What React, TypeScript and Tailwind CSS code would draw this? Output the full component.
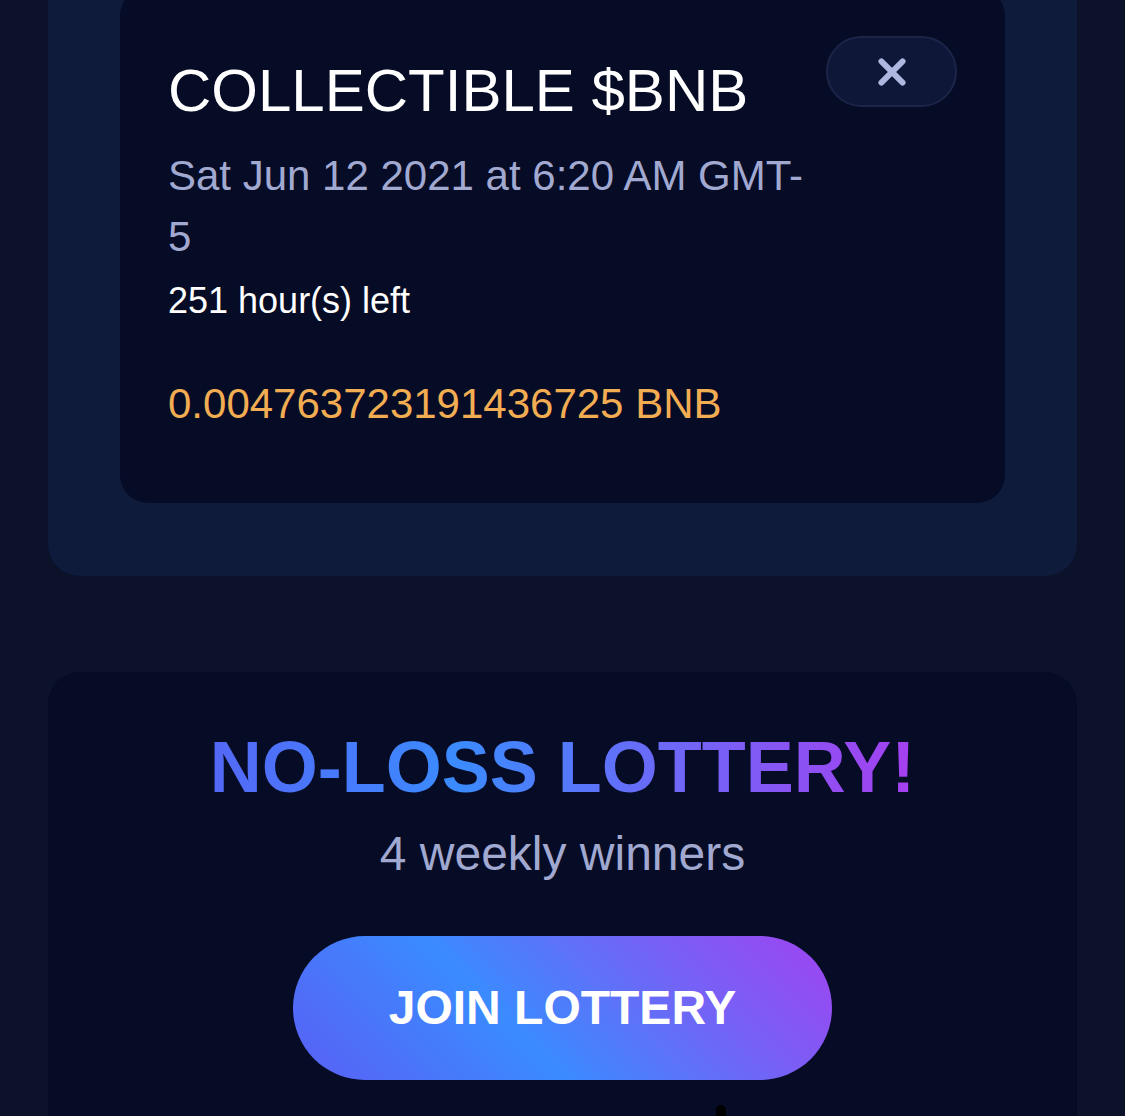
import React from 'react';

const XIcon = () => (
  <svg width="34" height="34" viewBox="0 0 32 32" fill="none">
    <path d="M6 6L26 26M26 6L6 26" stroke="#aeb7e0" strokeWidth="5.5" strokeLinecap="round" />
  </svg>
);

const App = () => {
  return (
    <div
      className="h-[1116px] w-full overflow-hidden bg-[#0b122a]"
      style={{ fontFamily: '"Liberation Sans", Arial, sans-serif' }}
    >
      <div className="-mt-[60px] px-[48px]">
        {/* reminder panel */}
        <div className="rounded-[32px] bg-[#0f1b3a] px-[72px] pt-[48px] pb-[73px]">
          <div className="flex items-start gap-[16px] rounded-[28px] bg-[#060b26] pt-[48px] pr-[48px] pb-[69px] pl-[48px]">
            <div className="mt-[19px] flex-1">
              <h2 className="text-[60px] leading-[72px] text-white">COLLECTIBLE $BNB</h2>
              <p className="mt-[18px] text-[42px] leading-[61px] text-[#a1a9d0]">
                Sat Jun 12 2021 at 6:20 AM GMT-<wbr />5
              </p>
              <p className="mt-[10px] text-[36px] leading-[48px] text-white">251 hour(s) left</p>
              <p className="mt-[48px] text-[42px] leading-[61px] text-[#f2ad52]">
                0.004763723191436725 BNB
              </p>
            </div>
            <button className="flex h-[71px] w-[131px] shrink-0 items-center justify-center rounded-full border-2 border-[#1c2548] bg-[#0f1738]">
              <XIcon />
            </button>
          </div>
        </div>

        {/* lottery card */}
        <div className="mt-[96px] flex flex-col items-center rounded-[32px] bg-[#060b26] pt-[52px] pb-[40px]">
          <h1 className="bg-[linear-gradient(90deg,#5468f6_0%,#3b8bff_35%,#6d68f7_65%,#a63ff0_100%)] bg-clip-text text-[72px] leading-[86px] font-bold text-transparent">
            NO-LOSS LOTTERY!
          </h1>
          <p className="mt-[15px] text-[48px] leading-[58px] text-[#a1a9d0]">4 weekly winners</p>
          <button className="mt-[53px] flex h-[144px] w-[539px] items-center justify-center rounded-full bg-[linear-gradient(45deg,#5a5ff5_0%,#3a8bff_40%,#7a5ef5_75%,#a043f0_100%)] text-[48px] font-bold text-white">
            JOIN LOTTERY
          </button>
          <div className="mt-[25px] ml-[316px] h-[12px] w-[10px] rounded-t-full bg-black" />
        </div>
      </div>
    </div>
  );
};

export default App;
